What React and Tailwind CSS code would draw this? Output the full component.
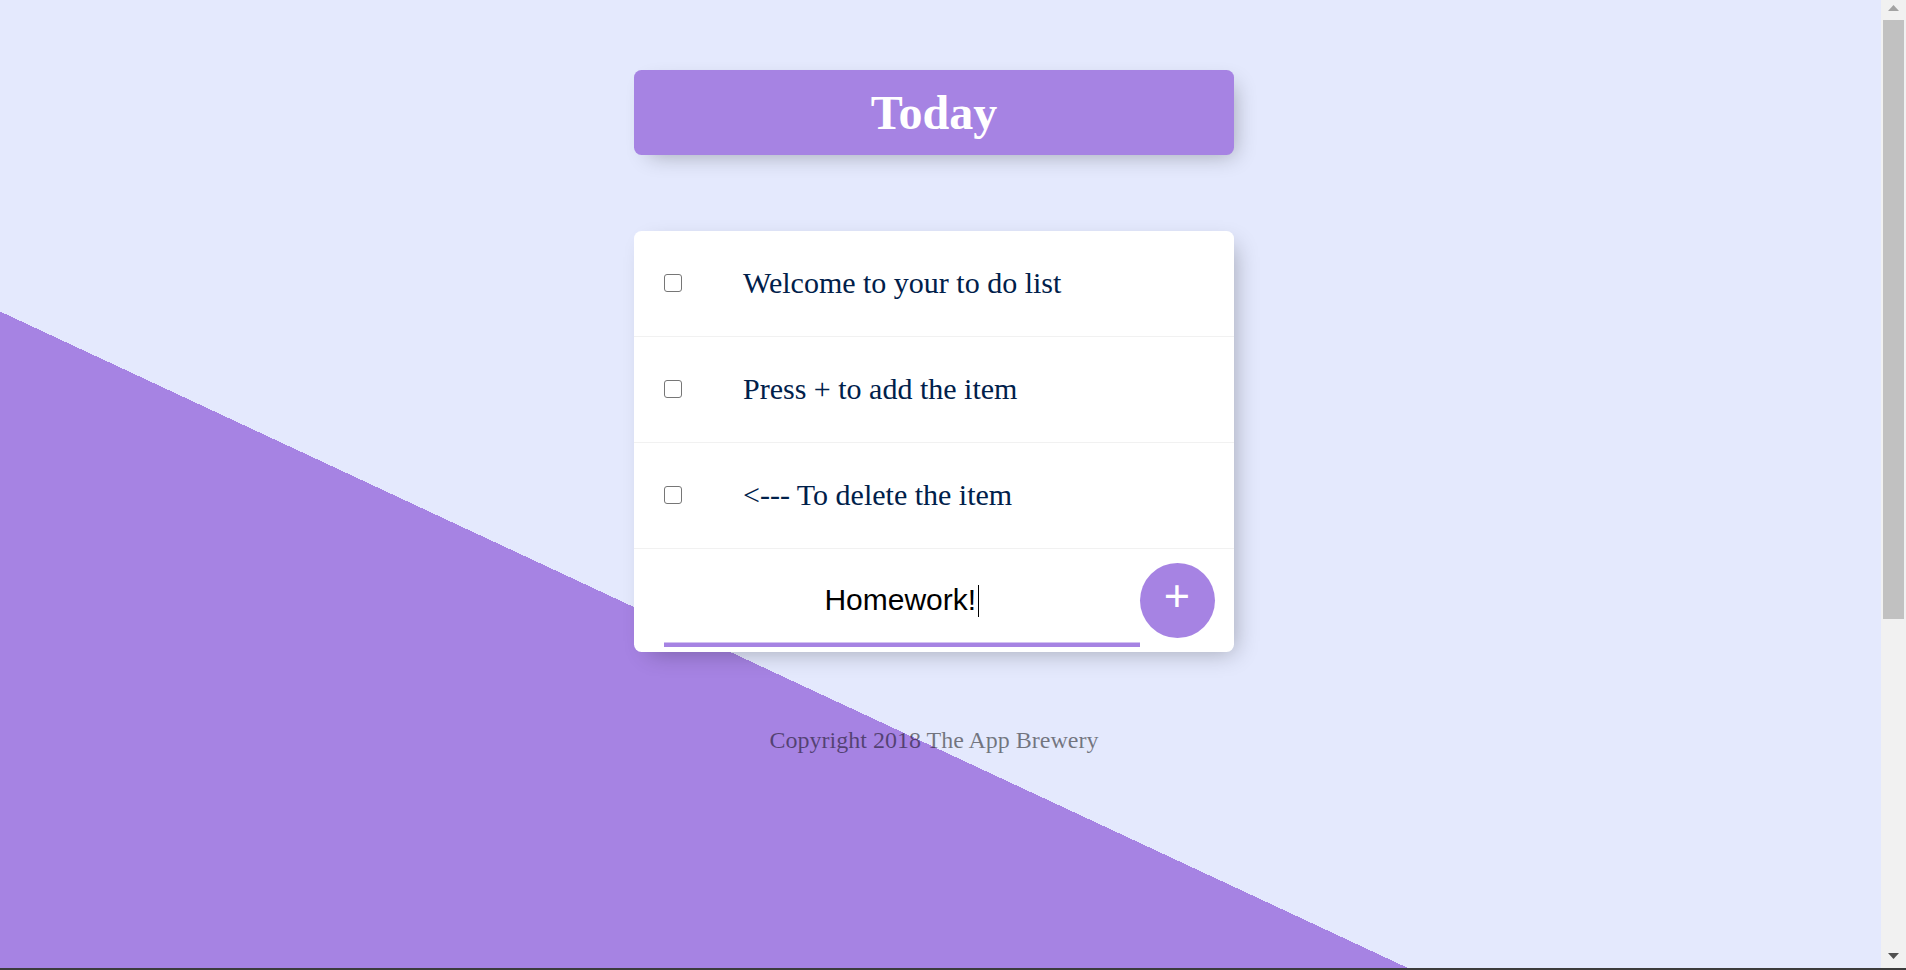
import React from "react";

const items = [
  "Welcome to your to do list",
  "Press + to add the item",
  "<--- To delete the item",
];

function Item({ text }) {
  return (
    <div className="flex items-center h-[106px] border-b border-[#f1f1f1]">
      <input
        type="checkbox"
        readOnly
        className="appearance-none ml-[30px] w-[18px] h-[18px] border-[1.5px] border-[#767676] rounded-[3px] bg-white shrink-0 -mt-[2px]"
      />
      <p className="ml-[61px] text-[30px] leading-[34.5px] text-[#00204a] font-['Liberation_Serif','Times_New_Roman',serif]">
        {text}
      </p>
    </div>
  );
}

function Scrollbar() {
  return (
    <div className="w-[25px] h-[968px] bg-[#f1f1f1] flex flex-col items-center">
      <div className="h-[20px] pt-[5px] flex justify-center">
        <svg width="11" height="6" viewBox="0 0 11 6">
          <polygon points="5.5,0 11,6 0,6" fill="#a3a3a3" />
        </svg>
      </div>
      <div className="w-[21px] h-[599px] bg-[#c1c1c1]" />
      <div className="flex-1" />
      <div className="pb-[9px] flex justify-center">
        <svg width="11" height="6" viewBox="0 0 11 6">
          <polygon points="0,0 11,0 5.5,6" fill="#505050" />
        </svg>
      </div>
    </div>
  );
}

export default function App() {
  return (
    <div className="flex flex-col w-full h-[970px] overflow-hidden font-['Liberation_Serif','Times_New_Roman',serif]">
      <div className="flex h-[968px]">
        <main className="flex-1 h-[968px] overflow-hidden">
          <div className="h-[1500px] bg-[linear-gradient(25deg,#A683E3_50%,#E4E9FD_50%)] flex flex-col items-center pt-[70px] pr-[13px]">
            <div className="w-[600px] h-[84.5px] bg-[#A683E3] rounded-[7.5px] shadow-[7.5px_7.5px_22.5px_-7.5px_rgba(0,0,0,0.3)] flex items-center justify-center">
              <h1 className="text-[48px] leading-[55px] font-bold text-white font-['Liberation_Serif','Times_New_Roman',serif]">
                Today
              </h1>
            </div>

            <div className="mt-[76.5px] w-[600px] bg-white rounded-[7.5px] shadow-[7.5px_7.5px_22.5px_-7.5px_rgba(0,0,0,0.3)]">
              {items.map((t) => (
                <Item key={t} text={t} />
              ))}
              <form
                className="flex items-center h-[103px] pl-[30px]"
                onSubmit={(e) => e.preventDefault()}
              >
                <div className="w-[475.5px] h-[93px] shrink-0 flex items-center justify-center shadow-[inset_0_-4.5px_0_0_#A683E3]">
                  <span className="text-[30px] leading-[34.5px] text-black font-['Liberation_Sans',Arial,sans-serif]">
                    Homework!
                  </span>
                  <span className="inline-block w-[1px] h-[32px] bg-black ml-[2px] mt-[1px]" />
                </div>
                <button
                  type="submit"
                  className="w-[75px] h-[75px] shrink-0 rounded-full bg-[#A683E3] text-white text-[45px] leading-[52px] pb-[9px] flex items-center justify-center font-['Liberation_Sans',Arial,sans-serif]"
                >
                  +
                </button>
              </form>
            </div>

            <footer className="mt-[75px] text-[24px] leading-[27.6px] text-black/50 text-center font-['Liberation_Serif','Times_New_Roman',serif]">
              Copyright 2018 The App Brewery
            </footer>
          </div>
        </main>
        <Scrollbar />
      </div>
      <div className="h-[2px] bg-[#3c3c3c]" />
    </div>
  );
}
